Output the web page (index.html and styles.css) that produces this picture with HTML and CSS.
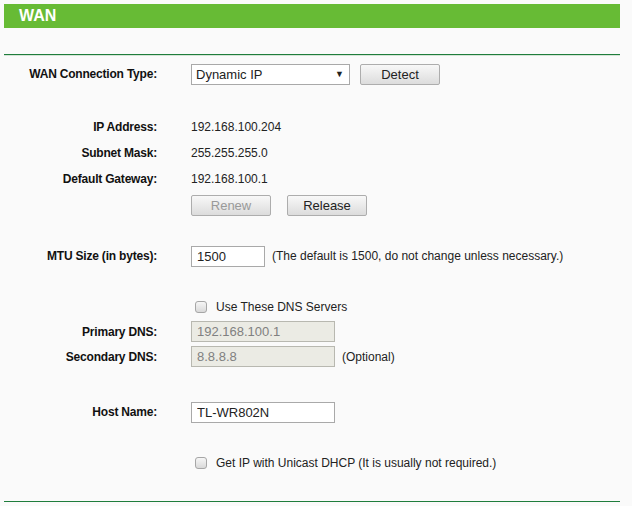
FILE: index.html
```html
<!DOCTYPE html>
<html lang="en">
<head>
  <meta charset="UTF-8">
  <title>WAN</title>
  <link rel="stylesheet" href="styles.css">
</head>
<body>

  <div class="title-bar">WAN</div>
  <div class="rule"></div>

  <div class="form">
    <div class="row first">
      <label class="label">WAN Connection Type:</label>
      <div class="field">
        <span class="select-wrap">
          <select class="select">
            <option>Dynamic IP</option>
            <option>Static IP</option>
            <option>PPPoE</option>
          </select>
          <span class="arrow">&#9660;</span>
        </span>
        <button class="btn">Detect</button>
      </div>
    </div>

    <div class="row gap wide">
      <label class="label">IP Address:</label>
      <div class="field">192.168.100.204</div>
    </div>
    <div class="row">
      <label class="label">Subnet Mask:</label>
      <div class="field">255.255.255.0</div>
    </div>
    <div class="row">
      <label class="label">Default Gateway:</label>
      <div class="field">192.168.100.1</div>
    </div>
    <div class="row">
      <span class="label"></span>
      <div class="field buttons">
        <button class="btn" disabled>Renew</button>
        <button class="btn">Release</button>
      </div>
    </div>

    <div class="row gap">
      <label class="label">MTU Size (in bytes):</label>
      <div class="field">
        <input class="text mtu" type="text" value="1500">
        <span class="note">(The default is 1500, do not change unless necessary.)</span>
      </div>
    </div>

    <div class="row gap tight">
      <span class="label"></span>
      <div class="field">
        <input class="check" type="checkbox" id="useDns">
        <label class="check-label" for="useDns">Use These DNS Servers</label>
      </div>
    </div>
    <div class="row tight">
      <label class="label">Primary DNS:</label>
      <div class="field">
        <input class="text dns" type="text" value="192.168.100.1" disabled>
      </div>
    </div>
    <div class="row tight">
      <label class="label">Secondary DNS:</label>
      <div class="field">
        <input class="text dns" type="text" value="8.8.8.8" disabled>
        <span class="note">(Optional)</span>
      </div>
    </div>

    <div class="row host">
      <label class="label">Host Name:</label>
      <div class="field">
        <input class="text dns" type="text" value="TL-WR802N">
      </div>
    </div>

    <div class="row gap">
      <span class="label"></span>
      <div class="field">
        <input class="check" type="checkbox" id="unicast">
        <label class="check-label" for="unicast">Get IP with Unicast DHCP (It is usually not required.)</label>
      </div>
    </div>
  </div>

  <div class="rule bottom"></div>

</body>
</html>
```

FILE: styles.css
```css
body {
  font-family: "Liberation Sans", Arial, sans-serif;
  font-size: 12px;
  background-color: #fafafa;
  color: #222;
  margin: 0;
  padding: 4px 12px 0 4px;
}
.title-bar {
  height: 24px;
  line-height: 24px;
  background-color: #67bb35;
  color: white;
  font-weight: bold;
  font-size: 16px;
  padding-left: 15px;
}
.rule {
  margin-top: 26px;
  border-top: 1px solid #1f7d3c;
  box-shadow: 0 1px 0 #d4e4d6;
}
.rule.bottom {
  margin-top: 25px;
}
.form {
  padding-top: 6px;
}
.row {
  display: grid;
  grid-template-columns: 153px 1fr;
  column-gap: 34px;
  align-items: center;
  height: 26px;
}
.row.gap {
  margin-top: 25px;
}
.row.wide {
  margin-top: 27px;
}
.row.tight {
  height: 25px;
}
.row.host {
  margin-top: 30px;
}
.label {
  text-align: right;
  font-weight: bold;
  color: #111;
  letter-spacing: -0.2px;
}
.field {
  display: flex;
  align-items: center;
  color: #222;
}
.select-wrap {
  position: relative;
  display: inline-block;
}
.select {
  appearance: none;
  -webkit-appearance: none;
  width: 159px;
  height: 21px;
  border: 1px solid #a9a9a9;
  background: white;
  font-family: inherit;
  font-size: 13px;
  color: #222;
  padding: 0 0 0 4px;
  margin: 0;
  border-radius: 0;
}
.arrow {
  position: absolute;
  right: 6px;
  top: 5px;
  font-size: 9px;
  color: #222;
  pointer-events: none;
}
.btn {
  width: 80px;
  height: 21px;
  margin-left: 10px;
  border: 1px solid #adadad;
  border-radius: 2px;
  background: linear-gradient(#f8f8f8, #dcdcdc);
  font-family: inherit;
  font-size: 13px;
  color: #222;
  padding: 0;
}
.btn:disabled {
  color: #999;
}
.buttons .btn:first-child {
  margin-left: 0;
}
.buttons .btn + .btn {
  margin-left: 16px;
}
.text {
  height: 21px;
  box-sizing: border-box;
  border: 1px solid #a9a9a9;
  background: white;
  font-family: inherit;
  font-size: 13px;
  color: #222;
  padding: 0 0 0 5px;
  margin: 0;
}
.text:disabled {
  background: #ebebe4;
  color: #808080;
  border-color: #b8b8b0;
}
.mtu {
  width: 74px;
}
.dns {
  width: 144px;
}
.note {
  margin-left: 7px;
}
.check {
  appearance: none;
  -webkit-appearance: none;
  width: 12px;
  height: 12px;
  margin: 0 0 0 4px;
  border: 1px solid #a6a6a6;
  border-radius: 3px;
  background: linear-gradient(#f6f6f6, #d9d9d9);
}
.check:checked {
  background: linear-gradient(#e0e0e0, #c8c8c8);
}
.check-label {
  margin-left: 9px;
}
```
